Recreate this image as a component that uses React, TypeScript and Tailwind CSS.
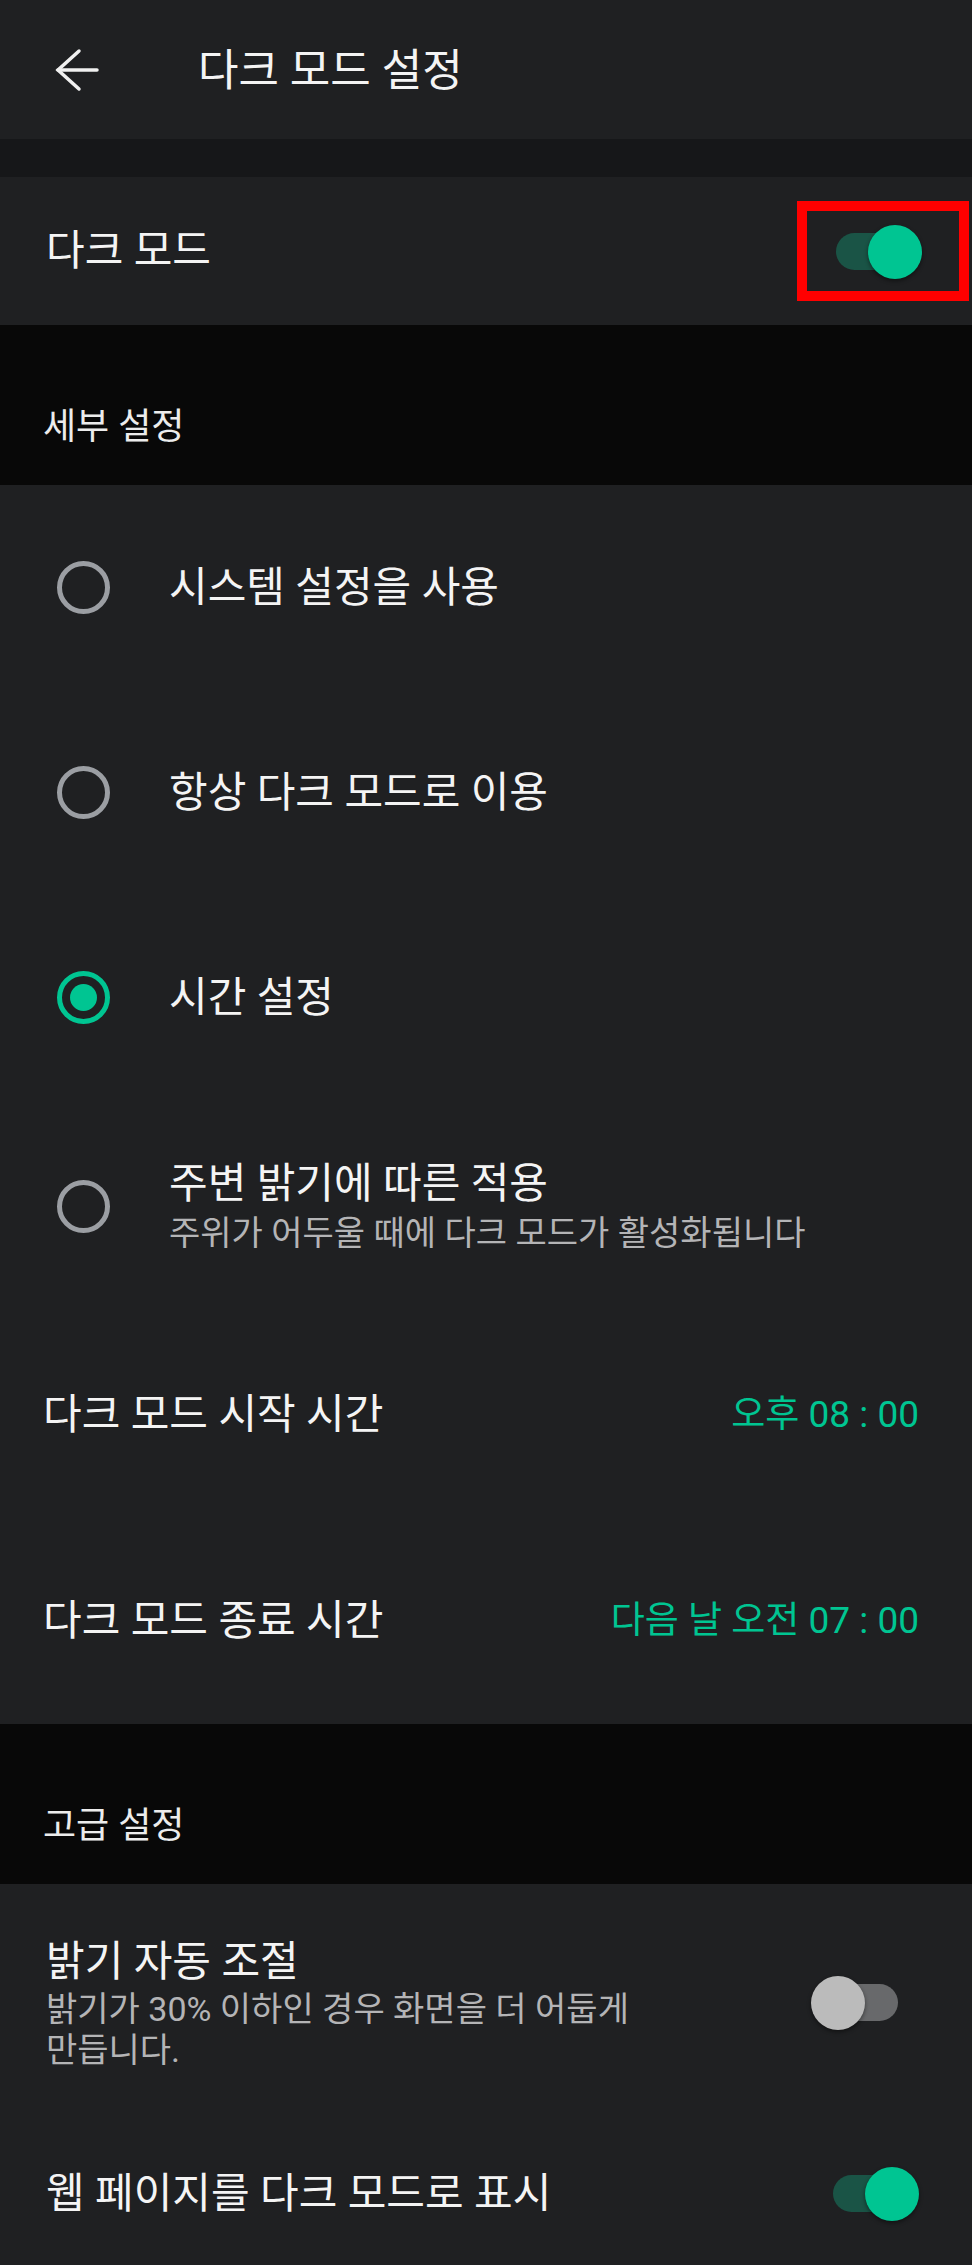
import React from 'react';

const Toggle = ({ on }: { on: boolean }) => (
  <div className={`relative w-[78px] h-[37px] rounded-full ${on ? 'bg-[#1a5446]' : 'bg-[#68696b]'}`}>
    <div
      className={`absolute top-[-8px] w-[54px] h-[54px] rounded-full shadow-[0_2px_4px_rgba(0,0,0,0.45)] ${
        on ? 'left-[32px] bg-[#00c592]' : 'left-[-9px] bg-[#bbbbbb]'
      }`}
    />
  </div>
);

const Radio = ({ checked }: { checked: boolean }) => (
  <div
    className={`w-[53px] h-[53px] shrink-0 rounded-full border-[5px] flex items-center justify-center ${
      checked ? 'border-[#00c592]' : 'border-[#9b9ea3]'
    }`}
  >
    {checked && <div className="w-[27px] h-[27px] rounded-full bg-[#00c592]" />}
  </div>
);

const RadioRow = ({ label, sub, checked = false, tall = false }: { label: string; sub?: string; checked?: boolean; tall?: boolean }) => (
  <div className={`${tall ? 'h-[212px]' : 'h-[205px]'} flex items-center pl-[57px]`}>
    <Radio checked={checked} />
    <div className="ml-[59px] flex flex-col">
      <span className="text-[42px] leading-[54px] text-[#f4f4f4]">{label}</span>
      {sub && <span className="text-[34px] leading-[44px] text-[#b4b4b6]">{sub}</span>}
    </div>
  </div>
);

const TimeRow = ({ label, value }: { label: string; value: string }) => (
  <div className="h-[206px] flex items-center justify-between pl-[43px] pr-[53px]">
    <span className="text-[42px] leading-[54px] text-[#f4f4f4]">{label}</span>
    <span className="text-[37px] leading-[54px] text-[#00c592]">{value}</span>
  </div>
);

const SectionHeader = ({ title }: { title: string }) => (
  <div className="h-[160px] bg-[#080808] flex flex-col justify-end pb-[35px] pl-[43px]">
    <span className="text-[36px] leading-[46px] text-[#ececec]">{title}</span>
  </div>
);

export default function App() {
  return (
    <div className="min-h-screen bg-[#1f2022] font-['Roboto','Noto_Sans_CJK_KR',sans-serif] text-white">
      <header className="h-[139px] flex items-center pl-[55px]">
        <svg width="44" height="44" viewBox="0 0 44 44" fill="none" stroke="#f0f0f0" strokeWidth="3.5" strokeLinecap="round">
          <path d="M3 22H42" />
          <path d="M24 3L3 22L24 41" />
        </svg>
        <h1 className="ml-[99px] text-[44px] leading-[56px] text-[#f4f4f4] mt-[3px]">다크 모드 설정</h1>
      </header>
      <div className="h-[38px] bg-[#161719]" />

      <div className="h-[148px] flex items-center justify-between pl-[46px] pr-[3px]">
        <span className="text-[42px] leading-[54px] text-[#f4f4f4]">다크 모드</span>
        <div className="w-[172px] h-[100px] border-[10px] border-[#ff0000] flex items-center pl-[29px]">
          <Toggle on />
        </div>
      </div>

      <SectionHeader title="세부 설정" />

      <RadioRow label="시스템 설정을 사용" />
      <RadioRow label="항상 다크 모드로 이용" />
      <RadioRow label="시간 설정" checked />
      <RadioRow label="주변 밝기에 따른 적용" sub="주위가 어두울 때에 다크 모드가 활성화됩니다" tall />

      <TimeRow label="다크 모드 시작 시간" value="오후 08 : 00" />
      <TimeRow label="다크 모드 종료 시간" value="다음 날 오전 07 : 00" />

      <SectionHeader title="고급 설정" />

      <div className="h-[237px] flex items-center justify-between pl-[46px] pr-[74px]">
        <div className="w-[610px] flex flex-col">
          <span className="text-[42px] leading-[54px] text-[#f4f4f4]">밝기 자동 조절</span>
          <span className="text-[34px] leading-[41px] text-[#b4b4b6]">
            밝기가 30% 이하인 경우 화면을 더 어둡게 만듭니다.
          </span>
        </div>
        <Toggle on={false} />
      </div>

      <div className="h-[145px] flex items-center justify-between pl-[46px] pr-[61px]">
        <span className="text-[42px] leading-[54px] text-[#f4f4f4]">웹 페이지를 다크 모드로 표시</span>
        <Toggle on />
      </div>
    </div>
  );
}
